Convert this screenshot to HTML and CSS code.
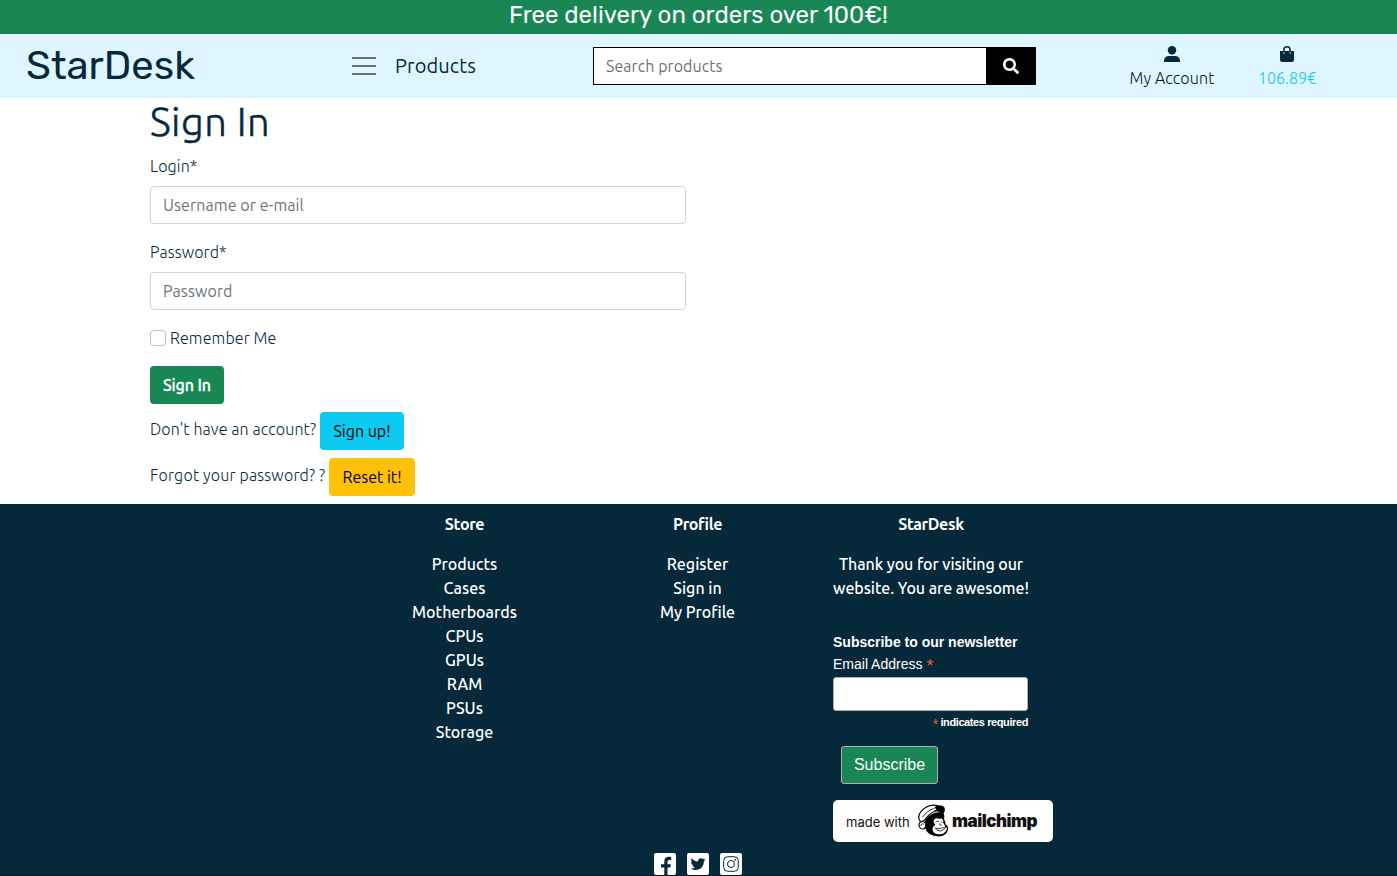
FILE: index.html
```html
<!DOCTYPE html>
<html lang="en">
<head>
<meta charset="utf-8">
<title>StarDesk - Sign In</title>
<link rel="stylesheet" href="styles.css">
</head>
<body>
<div class="banner"><span class="banner-text">Free delivery on orders over 100€!</span></div>
<header class="navbar">
  <a class="brand">StarDesk</a>
  <div class="menu">
    <svg class="burger" viewBox="0 0 24 18"><path d="M0 1h24M0 9h24M0 17h24"/></svg>
    <span class="menu-text">Products</span>
  </div>
  <form class="search">
    <input class="search-input" type="text" placeholder="Search products">
    <button class="search-btn" type="button" aria-label="Search">
      <svg viewBox="0 0 512 512" width="16" height="16"><path fill="currentColor" d="M505 442.700L405.300 343c-4.500-4.500-10.600-7-17-7H372c27.600-35.300 44-79.700 44-128C416 93.100 322.900 0 208 0S0 93.100 0 208s93.100 208 208 208c48.300 0 92.700-16.400 128-44v16.300c0 6.400 2.500 12.500 7 17l99.700 99.700c9.400 9.400 24.600 9.400 33.900 0l28.300-28.300c9.400-9.400 9.400-24.600.1-34zM208 336c-70.700 0-128-57.200-128-128 0-70.700 57.200-128 128-128 70.700 0 128 57.200 128 128 0 70.700-57.200 128-128 128z"/></svg>
    </button>
  </form>
  <a class="nav-item account">
    <svg viewBox="0 0 16 16" width="16" height="16"><circle cx="8" cy="4.200" r="4.200"/><path d="M0 16v-1.200C0 11.800 2 10 4.800 10h6.400c2.800 0 4.800 1.800 4.800 4.800V16z"/></svg>
    <span class="account-text">My Account</span>
  </a>
  <a class="nav-item cart">
    <svg viewBox="0 0 16 16" width="16" height="16"><path fill-rule="evenodd" d="M4.200 5V3.800a3.800 3.800 0 0 1 7.600 0V5H15v8.500a2.500 2.500 0 0 1-2.500 2.500h-9A2.500 2.500 0 0 1 1 13.500V5zM5.700 5h4.600V3.800a2.300 2.300 0 0 0-4.600 0zM4.900 6.200a.75.75 0 1 0 .02 1.500.75.75 0 0 0-.02-1.500zM11.100 6.200a.75.75 0 1 0 .02 1.500.75.75 0 0 0-.02-1.500z"/></svg>
    <span class="cart-text">106.89€</span>
  </a>
</header>
<main class="content">
  <h1 class="title"><span>Sign In</span></h1>
  <label class="label" for="login"><span>Login*</span></label>
  <input class="field" id="login" type="text" placeholder="Username or e-mail">
  <label class="label" for="password"><span>Password*</span></label>
  <input class="field" id="password" type="password" placeholder="Password">
  <label class="remember"><input class="check" type="checkbox"><span>Remember Me</span></label>
  <button class="btn btn-success" type="button">Sign In</button>
  <div class="line"><span class="line-signup">Don't have an account?</span><a class="btn btn-info">Sign up!</a></div>
  <div class="line"><span class="line-reset">Forgot your password? ?</span><a class="btn btn-warning">Reset it!</a></div>
</main>
<footer class="footer">
  <div class="columns">
    <section class="col">
      <h6 class="heading">Store</h6>
      <a>Products</a><a>Cases</a><a>Motherboards</a><a>CPUs</a><a>GPUs</a><a>RAM</a><a>PSUs</a><a>Storage</a>
    </section>
    <section class="col">
      <h6 class="heading">Profile</h6>
      <a>Register</a><a>Sign in</a><a>My Profile</a>
    </section>
    <section class="col about">
      <h6 class="heading">StarDesk</h6>
      <span class="thanks">Thank you for visiting our</span><span class="thanks">website. You are awesome!</span>
      <form class="newsletter">
        <strong class="news-title">Subscribe to our newsletter</strong>
        <label class="news-label" for="email">Email Address <span class="star">*</span></label>
        <input class="news-input" id="email" type="email">
        <div class="required"><span class="star">*</span> indicates required</div>
        <button class="subscribe" type="button">Subscribe</button>
        <a class="mailchimp">
          <span class="made">made with</span>
          <svg class="monkey" viewBox="0 0 114 120">
            <path d="M34 56C44 42 62 31 82 34C92 38 92 46 90 55C94 62 95 66 94 70C101 73 104 80 102 87C97 103 81 109 65 105C49 102 38 95 35 83C32 74 31 64 34 56z"/>
            <path class="cap" d="M19 61C10 52 14 37 26 26C38 15 56 9 70 14L84 24C63 27 45 39 34 54C30 60 25 64 19 61z"/>
            <path class="ink" d="M25 49C34 36 46 27 61 22"/>
            <path d="M62 20C68 10 84 11 91 19C95 27 91 36 86 41C82 34 73 30 60 31C61 27 64 27 68 26z"/>
            <path class="cap" d="M31 63C22 59 14 64 15 73C15 81 23 86 31 83C37 79 37 67 31 63z"/>
            <path class="ink" d="M21 75C20 69 26 66 30 71"/>
            <path class="white" d="M59 60C60 52 69 49 76 54C82 50 89 55 88 63C87 68 91 69 92 73C92 77 95 78 98 79C101 87 93 96 85 99C72 102 58 99 56 88C54 80 59 76 63 73C67 69 58 68 59 60z"/>
            <path class="ink" d="M65 63C68 60 73 60 75 63M81 63C84 61 86 63 86 64M78 67C74 71 78 73 83 72M62 81C74 85 86 80 97 79M66 83C72 92 85 92 92 82"/>
          </svg>
          <span class="chimp">mailchimp</span>
        </a>
      </form>
    </section>
  </div>
  <div class="social">
    <svg viewBox="0 0 22 22"><path fill-rule="evenodd" d="M2 0h18a2 2 0 0 1 2 2v18a2 2 0 0 1-2 2h-6.500v-7.500h2.800l.6-3.300h-3.400V9c0-1.300.6-2 2.100-2h1.600V4.100C13.500 3.300 10.300 4.200 10.300 8.300v2.900H7v3.300h3.300V22H2a2 2 0 0 1-2-2V2a2 2 0 0 1 2-2z"/></svg>
    <svg viewBox="0 0 22 22"><rect width="22" height="22" rx="2"/><path class="navy" d="M18.500 6.500l-1.700.5 1.200-1.700-2 .8c-2.300-2.200-5.400-.3-4.900 2.500-2.800-.1-5-1.400-6.500-3.300-.9 1.500-.5 3.200.8 4.100L4 9c0 1.500 1 2.800 2.500 3.200l-1.200.1c.4 1.100 1.400 1.900 2.700 2-1.300 1-2.800 1.400-4.400 1.200 6.300 3.700 13.300.1 13.200-7z"/></svg>
    <svg viewBox="0 0 22 22"><rect width="22" height="22" rx="2"/><g class="outline"><rect x="3.700" y="3.700" width="14.600" height="14.600" rx="4"/><circle cx="11" cy="11" r="3.500"/></g><circle class="navy" cx="15.200" cy="6.900" r=".8"/></svg>
  </div>
</footer>
</body>
</html>
```
FILE: styles.css
```css
* { box-sizing: border-box; }
body { margin: 0; height: 876px; overflow: hidden; display: flex; flex-direction: column; background: #fff; color: #05283b; font: 300 16px/24px Ubuntu, "Noto Sans", sans-serif; }
h1, h6 { margin: 0; }
input, button { font: inherit; margin: 0; }
.banner { height: 34px; background: #198754; color: #fff; text-align: center; font: 400 24px/31px Rubik, Roboto, sans-serif; }
.navbar { height: 64px; background: #dff5ff; display: flex; align-items: center; padding-left: 26px; }
.brand { width: 326px; font: 400 40px/48px Rubik, Roboto, sans-serif; }
.menu { width: 241px; display: flex; align-items: center; gap: 19px; font-size: 20px; font-weight: 400; line-height: 30px; letter-spacing: 0.1px; }
.burger { width: 24px; height: 18px; stroke: #687078; stroke-width: 2; stroke-linecap: round; }
.search { display: flex; width: 443px; height: 38px; }
.search-input { width: 393px; border: 1px solid #000; border-right: 0; padding: 6px 12px; font-weight: 400; border-radius: 0; background: #fff; letter-spacing: 0.06px; }
input::placeholder { color: #6c757d; opacity: 1; }
.search-btn { width: 50px; border: 0; background: #000; color: #fff; padding: 0; display: grid; place-items: center; }
.nav-item { display: flex; flex-direction: column; align-items: center; fill: #05283b; white-space: nowrap; }
.nav-item svg { margin: 4px 0; }
.account { width: 86px; margin-left: 93px; color: #05151f; }
.account-text { letter-spacing: 0.15px; }
.cart { width: 60px; margin-left: 42px; color: #0dcaf0; }
.content { height: 406px; padding: 0 150px; display: flex; flex-direction: column; align-items: flex-start; letter-spacing: 0.14px; }
.title { height: 56px; font-weight: 300; font-size: 40px; line-height: 48px; letter-spacing: 0.45px; -webkit-text-stroke: 0.5px #05283b; }
.label { height: 32px; }
.field { width: 536px; height: 38px; padding: 6px 12px; border: 1px solid #ced4da; border-radius: 4px; margin-bottom: 16px; font-weight: 400; letter-spacing: 0.1px; }
.remember { display: flex; gap: 4px; margin-bottom: 16px; height: 24px; }
.check { appearance: none; width: 16px; height: 16px; margin-top: 4px; border: 1px solid #bfbfbf; border-radius: 4px; }
.btn { height: 38px; display: flex; align-items: center; justify-content: center; padding: 0; border: 0; border-radius: 4px; margin-bottom: 8px; }
.btn-success { width: 74px; background: #198754; color: #fff; font-weight: 500; letter-spacing: -0.1px; -webkit-text-stroke: 0.3px #fff; }
.line { display: flex; line-height: 34px; white-space: nowrap; }
.line-signup { width: 170px; }
.line-reset { width: 179px; letter-spacing: 0.2px; }
.btn-info { width: 84px; background: #0dcaf0; color: #000; font-weight: 400; letter-spacing: 0; }
.btn-warning { width: 86px; background: #ffc107; color: #000; font-weight: 400; letter-spacing: 0; }
.footer { height: 372px; background: #05283b; color: #fff; font-weight: 500; border-bottom: 1px solid #031c2a; }
.columns { height: 348px; padding: 8px 350px 0 348px; display: grid; grid-template-columns: 233px 233px 233px; }
.col { display: flex; flex-direction: column; align-items: center; }
.about { padding-left: 1px; }
.heading { font-size: 16px; font-weight: 700; line-height: 24px; margin-bottom: 16px; letter-spacing: -0.35px; }
.thanks { letter-spacing: -0.07px; }
.newsletter { align-self: stretch; margin: 31px 0 0 18px; display: flex; flex-direction: column; align-items: flex-start; font-family: "Liberation Sans", Arial, sans-serif; font-weight: 400; letter-spacing: 0; }
.news-title { font-size: 14px; line-height: 22px; }
.news-label { font-size: 14px; line-height: 22px; margin-bottom: 2px; }
.star { color: #e85c41; }
.news-label .star { font-size: 18px; line-height: 16px; vertical-align: -3px; }
.news-input { width: 195px; height: 34px; border: 1px solid #abb0b2; border-radius: 3px; background: #fff; }
.required { width: 195px; font-size: 11px; font-weight: 700; line-height: 22px; text-align: right; letter-spacing: -0.4px; }
.required .star { font-size: 14px; line-height: 12px; vertical-align: -3px; font-weight: 400; }
.subscribe { width: 97px; height: 38px; margin: 13px 0 16px 8px; padding: 0; border: 1px solid #abb0b2; border-radius: 3px; background: #198754; color: #fff; font-size: 16px; }
.mailchimp { width: 220px; height: 42px; border-radius: 5px; background: #fff; color: #111; display: flex; align-items: center; padding-left: 13px; }
.made { width: 68px; font: 400 13px/20px Inter, sans-serif; padding-top: 2px; }
.monkey { width: 38px; height: 40px; fill: #000; }
.monkey .white { fill: #fff; }
.monkey .cap { fill: #fff; stroke: #000; stroke-width: 3.500; }
.monkey .ink { fill: none; stroke: #000; stroke-width: 2.500; }
.chimp { font: 900 17px/24px Inter, sans-serif; letter-spacing: -0.5px; }
.social { display: flex; justify-content: center; gap: 11px; padding: 1px 2px 0 0; }
.social svg { width: 22px; height: 22px; fill: #fff; }
.social .navy { fill: #05283b; }
.social .outline { fill: none; stroke: #05283b; stroke-width: 1; }
```
